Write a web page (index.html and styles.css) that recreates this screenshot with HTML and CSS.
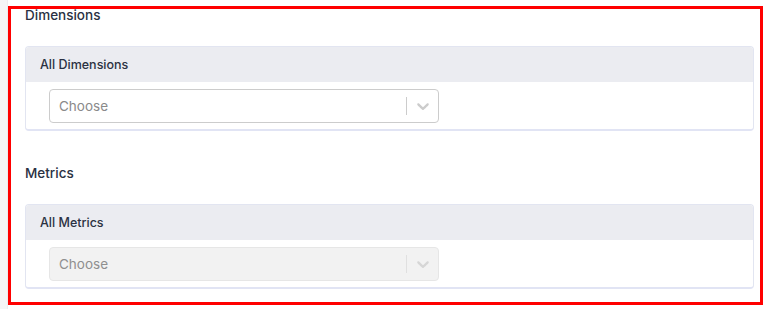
FILE: index.html
```html
<!DOCTYPE html>
<html>
<head>
<meta charset="utf-8">
<link rel="stylesheet" href="styles.css">
</head>
<body>
<div class="page">
  <div class="side"></div>
  <div class="frame">
    <section class="group">
      <h3 class="group-title">Dimensions</h3>
      <div class="card">
        <div class="card-head">All Dimensions</div>
        <div class="card-body">
          <div class="select">
            <span class="placeholder">Choose</span>
            <span class="sep"></span>
            <svg class="chev" viewBox="0 0 20 20" width="20" height="20"><path d="M4.516 7.548c0.436-0.446 1.043-0.481 1.576 0l3.908 3.747 3.908-3.747c0.533-0.481 1.141-0.446 1.574 0 0.436 0.445 0.408 1.197 0 1.615-0.406 0.418-4.695 4.502-4.695 4.502-0.217 0.223-0.502 0.335-0.787 0.335s-0.57-0.112-0.789-0.335c0 0-4.287-4.084-4.695-4.502s-0.436-1.17 0-1.615z"/></svg>
          </div>
        </div>
      </div>
    </section>
    <section class="group group-2">
      <h3 class="group-title">Metrics</h3>
      <div class="card">
        <div class="card-head">All Metrics</div>
        <div class="card-body">
          <div class="select disabled">
            <span class="placeholder">Choose</span>
            <span class="sep"></span>
            <svg class="chev" viewBox="0 0 20 20" width="20" height="20"><path d="M4.516 7.548c0.436-0.446 1.043-0.481 1.576 0l3.908 3.747 3.908-3.747c0.533-0.481 1.141-0.446 1.574 0 0.436 0.445 0.408 1.197 0 1.615-0.406 0.418-4.695 4.502-4.695 4.502-0.217 0.223-0.502 0.335-0.787 0.335s-0.57-0.112-0.789-0.335c0 0-4.287-4.084-4.695-4.502s-0.436-1.17 0-1.615z"/></svg>
          </div>
        </div>
      </div>
    </section>
  </div>
</div>
</body>
</html>
```
FILE: styles.css
```css
* { box-sizing: border-box; }
html, body { margin: 0; padding: 0; background: #fff; }
body {
  font-family: "Inter", "Open Sans", sans-serif;
  color: #2a3142;
  width: 772px;
  height: 309px;
  overflow: hidden;
}
.page { display: flex; height: 309px; }
.side {
  width: 8px;
  background: #f5f5f6;
  border-right: 1px solid #ececee;
  flex: none;
}
.frame {
  margin-top: 6px;
  width: 755px;
  height: 299px;
  border: 3px solid #ff0000;
  padding: 0 6px 0 14px;
  overflow: hidden;
}
.group-title {
  margin: 0;
  font-size: 13.5px;
  font-weight: 500;
  line-height: 13px;
  height: 37px;
}
.group-2 { margin-top: 34px; }
.group-2 .group-title { height: 39px; padding-top: 2px; }
.card {
  border: 1px solid #e2e5f1;
  border-bottom: 2px solid #e1e4f4;
  border-radius: 4px;
  overflow: hidden;
  background: #fff;
}
.card-head {
  background: #ebecf1;
  height: 35px;
  display: flex;
  align-items: center;
  padding-left: 14px;
  font-size: 12.5px;
  font-weight: 500;
}
.card-body {
  padding: 7px 23px 6px 23px;
}
.select {
  width: 390px;
  height: 34px;
  border: 1px solid #cccccc;
  border-radius: 4px;
  display: flex;
  align-items: center;
  padding-left: 9px;
  padding-right: 5px;
  background: #fff;
}
.placeholder {
  flex: 1;
  font-size: 13.5px;
  color: #8a8a8a;
}
.sep {
  width: 1px;
  height: 18px;
  background: #cccccc;
  margin-right: 6px;
}
.chev { fill: #cccccc; display: block; }
.select.disabled {
  background: #f2f2f2;
  border-color: #e6e6e6;
}
.select.disabled .placeholder { color: #8f8f8f; }
.select.disabled .sep { background: #e0e0e0; }
.select.disabled .chev { fill: #d6d6d6; }
```
